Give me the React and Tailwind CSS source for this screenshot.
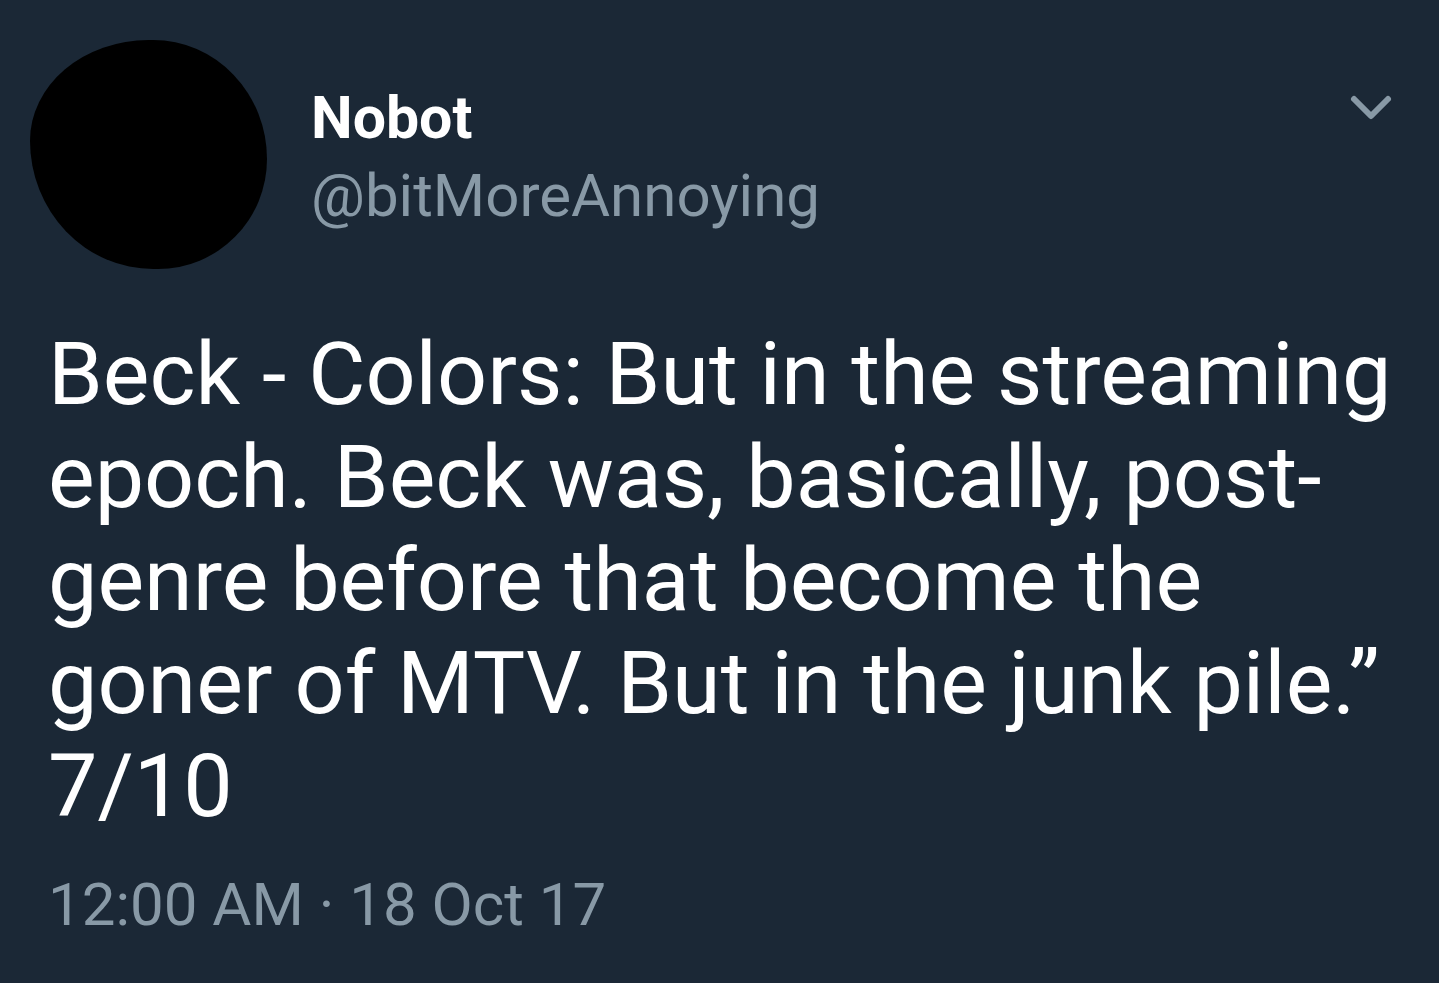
export default function App() {
  const lines = [
    'Beck - Colors: But in the streaming',
    'epoch. Beck was, basically, post-',
    'genre before that become the',
    'goner of MTV. But in the junk pile.\u201D',
    '7/10',
  ]

  return (
    <div
      className="w-full h-[983px] bg-[#1b2836] text-white overflow-hidden"
      style={{ fontFamily: 'Roboto, "Liberation Sans", sans-serif' }}
    >
      {/* Header */}
      <div className="flex items-start pt-[40px] pl-[30px] pr-[46px]">
        <div className="w-[237px] h-[229px] bg-black rounded-[50%_48%_46%_52%/44%_52%_48%_56%] shrink-0" />
        <div className="ml-[44px] mt-[48px] flex flex-col">
          <span className="text-[59px] leading-none font-bold">Nobot</span>
          <span className="mt-[19px] text-[60px] leading-none text-[#8899a6]">@bitMoreAnnoying</span>
        </div>
        <div className="ml-auto mt-[54px]">
          <svg width="44" height="28" viewBox="0 0 44 28" fill="none">
            <path d="M5 5 L22 22 L39 5" stroke="#8899a6" strokeWidth="6" strokeLinecap="round" strokeLinejoin="round" />
          </svg>
        </div>
      </div>

      {/* Body */}
      <div className="pl-[48px] mt-[53px] text-[88px] leading-[103px]">
        {lines.map((l, i) => (
          <div key={i} className="whitespace-nowrap">{l}</div>
        ))}
      </div>

      {/* Timestamp */}
      <div className="pl-[48px] mt-[38px] text-[60px] leading-none text-[#8899a6]">
        12:00 AM · 18 Oct 17
      </div>
    </div>
  )
}
